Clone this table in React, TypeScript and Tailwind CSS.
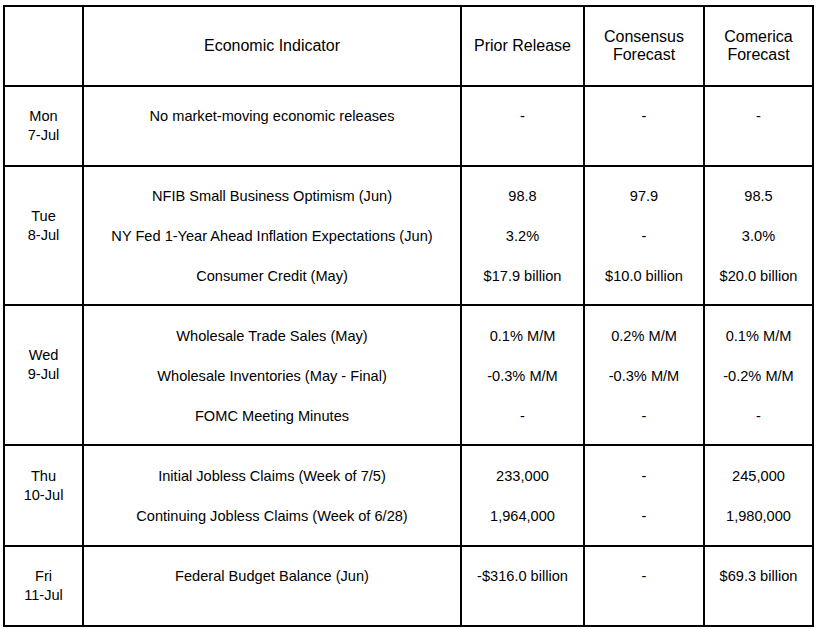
import React from "react";

type Row = {
  day: string;
  date: string;
  h: string;
  items: string[][];
  lowDay?: boolean;
};

const rows: Row[] = [
  {
    day: "Mon",
    date: "7-Jul",
    h: "h-[80px]",
    items: [["No market-moving economic releases", "-", "-", "-"]],
  },
  {
    day: "Tue",
    date: "8-Jul",
    h: "h-[139px]",
    lowDay: true,
    items: [
      ["NFIB Small Business Optimism (Jun)", "98.8", "97.9", "98.5"],
      ["NY Fed 1-Year Ahead Inflation Expectations (Jun)", "3.2%", "-", "3.0%"],
      ["Consumer Credit (May)", "$17.9 billion", "$10.0 billion", "$20.0 billion"],
    ],
  },
  {
    day: "Wed",
    date: "9-Jul",
    h: "h-[140px]",
    lowDay: true,
    items: [
      ["Wholesale Trade Sales (May)", "0.1% M/M", "0.2% M/M", "0.1% M/M"],
      ["Wholesale Inventories (May - Final)", "-0.3% M/M", "-0.3% M/M", "-0.2% M/M"],
      ["FOMC Meeting Minutes", "-", "-", "-"],
    ],
  },
  {
    day: "Thu",
    date: "10-Jul",
    h: "h-[101px]",
    lowDay: true,
    items: [
      ["Initial Jobless Claims (Week of 7/5)", "233,000", "-", "245,000"],
      ["Continuing Jobless Claims (Week of 6/28)", "1,964,000", "-", "1,980,000"],
    ],
  },
  {
    day: "Fri",
    date: "11-Jul",
    h: "h-[80px]",
    items: [["Federal Budget Balance (Jun)", "-$316.0 billion", "-", "$69.3 billion"]],
  },
];

const cell = "border-2 border-black text-center align-middle px-1";
const head = cell + " font-normal text-[16px] leading-[18px]";

export default function App() {
  return (
    <div className="bg-white w-[820px] h-[629px] pt-[5px] pl-[3px] text-black text-[14.6px] leading-[19px] [font-family:'Liberation_Sans',Arial,sans-serif]">
      <table className="table-fixed border-collapse w-[811px]">
        <colgroup>
          <col className="w-[79px]" />
          <col className="w-[378px]" />
          <col className="w-[123px]" />
          <col className="w-[120px]" />
          <col className="w-[109px]" />
        </colgroup>
        <thead>
          <tr className="h-[80px]">
            <th className={head}></th>
            <th className={head}>Economic Indicator</th>
            <th className={head}>Prior Release</th>
            <th className={head}>
              Consensus
              <br />
              Forecast
            </th>
            <th className={head}>
              Comerica
              <br />
              Forecast
            </th>
          </tr>
        </thead>
        <tbody>
          {rows.map((r) => {
            const pad = r.lowDay ? "pt-[2px]" : "pb-[20px]";
            return (
              <tr key={r.day} className={r.h}>
                <td className={cell + (r.lowDay ? " pb-[20px]" : "")}>
                  {r.day}
                  <br />
                  {r.date}
                </td>
                {[0, 1, 2, 3].map((c) => (
                  <td key={c} className={cell + " " + pad}>
                    <div className="flex flex-col gap-[21px]">
                      {r.items.map((it, i) => (
                        <div key={i}>{it[c]}</div>
                      ))}
                    </div>
                  </td>
                ))}
              </tr>
            );
          })}
        </tbody>
      </table>
    </div>
  );
}
